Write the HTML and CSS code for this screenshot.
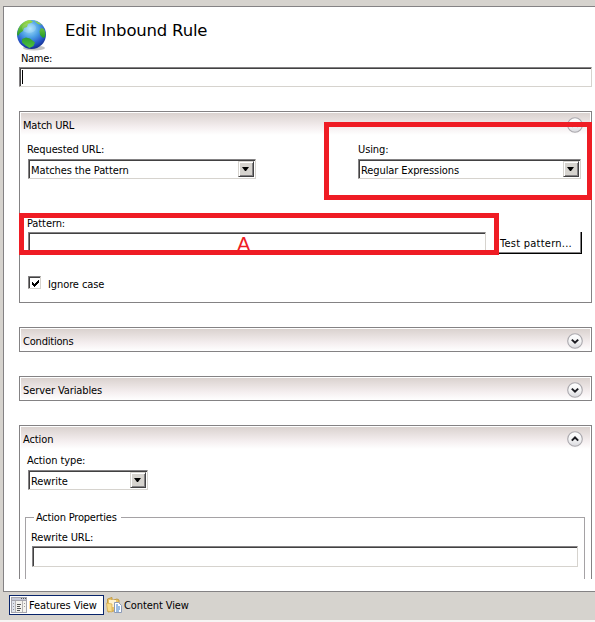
FILE: index.html
```html
<!DOCTYPE html>
<html lang="en">
<head>
<meta charset="utf-8">
<title>Edit Inbound Rule</title>
<link rel="stylesheet" href="styles.css">
</head>
<body>
<svg class="defs" width="0" height="0">
  <defs>
    <linearGradient id="disc" x1="0" y1="0" x2="0" y2="1"><stop offset="0" stop-color="#fff"/><stop offset=".55" stop-color="#f3f3f4"/><stop offset="1" stop-color="#d9d9de"/></linearGradient>
    <radialGradient id="sea" cx=".45" cy=".3" r=".7"><stop offset="0" stop-color="#a8e4fb"/><stop offset=".45" stop-color="#4a9de4"/><stop offset=".8" stop-color="#2452c4"/><stop offset="1" stop-color="#16308f"/></radialGradient>
    <linearGradient id="land" x1="0" y1="0" x2="0" y2="1"><stop offset="0" stop-color="#a4dc48"/><stop offset="1" stop-color="#1f9a28"/></linearGradient>
    <linearGradient id="land-low" x1="0" y1="0" x2="0" y2="1"><stop offset="0" stop-color="#2f9c35"/><stop offset="1" stop-color="#4fc43a"/></linearGradient>
    <symbol id="down" viewBox="0 0 16 16"><circle cx="8" cy="8" r="7.3" fill="url(#disc)" stroke="#aaa8ad" stroke-width="1.1"/><path d="M4.8 6.6 8 9.7l3.2-3.1" fill="none" stroke="#1c1c22" stroke-width="2"/></symbol>
    <symbol id="up" viewBox="0 0 16 16"><circle cx="8" cy="8" r="7.3" fill="url(#disc)" stroke="#aaa8ad" stroke-width="1.1"/><path d="M4.8 9.6 8 6.5l3.2 3.1" fill="none" stroke="#1c1c22" stroke-width="2"/></symbol>
  </defs>
</svg>
<main class="pane">
  <header class="title-row">
    <svg class="globe" width="32" height="33" viewBox="0 0 32 33">
      <ellipse cx="18" cy="29" rx="11" ry="2.600" fill="#c4c4c4"/>
      <circle cx="15.500" cy="15.500" r="14.500" fill="url(#sea)"/>
      <path d="M2 11C4 5 9 1.500 14 1l3 1.500-2 1.500-3 1-1 3-3 1-1 3-3 2-2 3-1-2z" fill="url(#land)"/>
      <path d="M18 1.500 23 3.500 26 6l-4-1zM25 9l3 1 1.500 4-.5 4-2 1-3-3-.5-4z" fill="url(#land)"/>
      <path d="M6 20l4-1.500 4 1 5 4-1.500 3.500-4 2-4-2.500-3.500-3z" fill="url(#land-low)"/>
      <ellipse cx="13" cy="9" rx="7" ry="5" fill="#fff" opacity=".16"/>
    </svg>
    <h1>Edit Inbound Rule</h1>
  </header>
  <label class="text name-label">Name:</label>
  <div class="field name-field"><i class="caret"></i></div>

  <section class="group match">
    <div class="group-head"><span class="text t-match">Match URL</span><svg class="toggle" width="16" height="16"><use href="#up"/></svg></div>
    <div class="match-row">
      <div class="requested"><label class="text t-req">Requested URL:</label>
        <div class="field select"><span class="text t-matches">Matches the Pattern</span><b class="drop"></b></div></div>
      <div class="using"><label class="text t-using">Using:</label>
        <div class="field select"><span class="text t-regex">Regular Expressions</span><b class="drop"></b></div></div>
    </div>
    <label class="text t-pattern">Pattern:</label>
    <div class="pattern-row"><div class="field pattern"></div><div class="button"><span class="text t-test">Test pattern...</span></div></div>
    <div class="check-row"><span class="checkbox"><svg width="9" height="9" viewBox="0 0 9 9" shape-rendering="crispEdges"><path d="M1 3h1v1h1v1h1V4h1V3h1V2h1V1h1v3H7v1H6v1H5v1H4v1H3V7H2V6H1z" fill="#000"/></svg></span><span class="text t-ignore">Ignore case</span></div>
    <span class="mark-letter">A</span>
    <div class="mark mark-using"></div>
    <div class="mark mark-pattern"></div>
  </section>

  <section class="group"><div class="group-head"><span class="text t-cond">Conditions</span><svg class="toggle" width="16" height="16"><use href="#down"/></svg></div></section>
  <section class="group"><div class="group-head"><span class="text t-server">Server Variables</span><svg class="toggle" width="16" height="16"><use href="#down"/></svg></div></section>

  <section class="group action">
    <div class="group-head"><span class="text t-action">Action</span><svg class="toggle" width="16" height="16"><use href="#up"/></svg></div>
    <label class="text t-type">Action type:</label>
    <div class="field select type"><span class="text t-rewrite">Rewrite</span><b class="drop"></b></div>
    <div class="properties">
      <div class="legend"><i class="rule short"></i><span class="text t-props">Action Properties</span><i class="rule"></i></div>
      <div class="properties-body"><label class="text t-url">Rewrite URL:</label><div class="field url"></div></div>
    </div>
  </section>
</main>
<footer class="tabs">
  <div class="tab active">
    <svg width="16" height="16" viewBox="0 0 16 16" shape-rendering="crispEdges"><path d="M0 0h16v16H0z" fill="#a5a5ad"/><path d="M1 4h14v11H1z" fill="#f4f3ee"/><path d="M1 1h14v2H1z" fill="#c5c8d8"/><path d="M10 1h1v1h-1zM12 1h1v1h-1zM14 1h1v1h-1z" fill="#555"/><path d="M1 4h3v11H1z" fill="#dfe3ec"/><path d="M4 4h1v11H4zM11 4h1v11h-1z" fill="#b7b5b5"/><path d="M6 7h4v1H6zM6 9h3v1H6zM6 11h4v1H6zM6 13h3v1H6z" fill="#555"/><path d="M2 6h1v1H2zM2 9h1v1H2zM2 12h1v1H2zM13 6h1v1h-1zM13 9h1v1h-1z" fill="#999"/></svg>
    <span class="text t-features">Features View</span>
  </div>
  <div class="tab">
    <svg width="16" height="16" viewBox="0 0 16 16"><path d="M1.500 2 6 .5v3L11 2l2 1v10L2 15z" fill="#edc568" stroke="#c19a42"/><path d="M3 3h7v7H3z" fill="#fff3cf"/><path d="M.5 6 6 7v8l-4.500-1z" fill="#f8dc8c" stroke="#d3a94d" stroke-width=".7"/><path d="M8.500 5.500h4l3 3v7h-7z" fill="#fff" stroke="#8c9bb8"/><path d="M10 8h2M10 10h4M10 12h4M10 14h3" stroke="#387bc5"/></svg>
    <span class="text t-content">Content View</span>
  </div>
</footer>
</body>
</html>
```
FILE: styles.css
```css
* { box-sizing: border-box; }
body {
  margin: 0;
  width: 595px;
  height: 622px;
  padding-top: 6px;
  overflow: hidden;
  background: #d6d3ce;
  color: #000;
  font: 11px/14px "DejaVu Sans Condensed", "DejaVu Sans", sans-serif;
  font-stretch: condensed;
  letter-spacing: -0.1px;
}
.defs { position: absolute; }
.text { display: block; height: 14px; white-space: nowrap; }
.pane {
  height: 586px;
  margin-left: 3px;
  padding: 0 3px 0 15px;
  border: 1px solid #848284;
  border-right: 0;
  background: #fff;
}
.title-row { display: flex; height: 45px; padding-top: 12px; margin-left: -3px; }
.globe { flex: none; }
h1 { margin: 0 0 0 17px; font: 400 16.5px/24px "DejaVu Sans", sans-serif; font-stretch: normal; letter-spacing: -0.2px; white-space: nowrap; }
.name-label { margin-left: 2px; letter-spacing: -0.3px; }
.field {
  height: 20px;
  border: 1px solid #848284;
  border-right-color: #d6d3ce;
  border-bottom-color: #d6d3ce;
  box-shadow: inset 1px 1px #424142;
  background: #fff;
}
.name-field { margin: 1px 0 24px; padding: 2px; }
.caret { display: block; width: 1px; height: 14px; background: #000; }
.group {
  position: relative;
  height: 25px;
  margin-bottom: 24px;
  border: 1px solid #848284;
  padding: 1px;
}
.group-head {
  display: flex;
  justify-content: space-between;
  height: 22px;
  padding: 5px 7px 0 2px;
  background: linear-gradient(#dad2cf, #f5eff0 65%, #fff);
}
.group-head .text { padding-top: 1px; height: 15px; }
.toggle { margin-top: -1px; }
.t-match { letter-spacing: -0.2px; }
.t-server { letter-spacing: -0.1px; }
.t-cond { letter-spacing: -0.2px; }
.match { height: 192px; }
.match-row { display: flex; gap: 103px; padding: 8px 9px 0 7px; }
.requested { width: 227px; flex: none; }
.using { width: 222px; flex: none; }
.requested .select { width: 228px; }
.using .select { width: 223px; }
.t-req, .t-using { margin-left: -1px; }
.t-using { margin-left: 0; }
.select { display: flex; justify-content: space-between; margin-top: 2px; padding: 1px 1px 0 2px; }
.select .text { padding-top: 3px; height: 17px; }
.drop {
  display: flex;
  width: 16px;
  height: 16px;
  border: 1px solid #d6d3ce;
  border-right-color: #424142;
  border-bottom-color: #424142;
  box-shadow: inset 1px 1px #fff, inset -1px -1px #848284;
  background: #d6d3ce;
}
.drop::after { content: ""; width: 7px; height: 4px; margin: 5px 0 0 3px; background: #000; clip-path: polygon(0 0, 100% 0, 57% 100%, 43% 100%); }
.t-pattern { margin: 38px 0 0 6px; }
.pattern-row { display: flex; margin: 1px 0 0 7px; }
.pattern { width: 458px; }
.button { width: 96px; height: 22px; padding: 5px 0 0 14px; border: solid #000; border-width: 0 1px 1px 0; box-shadow: inset -1px -1px #848284; }
.t-test { letter-spacing: 0.25px; }
.check-row { display: flex; gap: 7px; margin: 22px 0 0 7px; }
.checkbox { width: 13px; height: 13px; padding: 1px; border: 1px solid #848284; border-right-color: #d6d3ce; border-bottom-color: #d6d3ce; box-shadow: inset 1px 1px #424142; }
.checkbox svg { display: block; margin: 1px; }
.t-ignore { margin-top: 2px; letter-spacing: -0.1px; }
.mark { position: absolute; border: 5px solid #ef1c24; }
.mark-using { left: 304px; top: 10px; width: 268px; height: 78px; }
.mark-pattern { left: -1px; top: 101px; width: 480px; height: 42px; }
.mark-letter { position: absolute; left: 217px; top: 120px; font: 20px/24px "Liberation Sans", sans-serif; color: #ef1c24; }
.action { height: 154px; border-bottom: 0; overflow: hidden; margin: 0; }
.t-type { margin: 5px 0 0 6px; }
.type { width: 120px; margin: 2px 0 0 7px; }
.properties { margin: 20px 5px 0 4px; }
.legend { display: flex; align-items: center; height: 14px; }
.rule { height: 1px; flex: 1; background: #a5a2a5; }
.short { flex: none; width: 9px; margin-right: 2px; }
.t-props { height: 16px; padding-top: 2px; margin-right: 4px; letter-spacing: -0.2px; }
.properties-body { height: 63px; margin-top: -7px; padding: 14px 6px 0; border: 1px solid #a5a2a5; border-width: 0 1px; }
.t-url { margin-left: -1px; }
.url { height: 21px; margin-top: 1px; }
.tabs { display: flex; height: 30px; padding: 3px 0 0 9px; border-bottom: 2px solid #f7f5f4; }
.tab { display: flex; width: 95px; height: 20px; padding: 1px; border: 1px solid transparent; }
.tab svg { flex: none; margin-right: 2px; }
.tab .text { margin-top: 2px; }
.t-content { letter-spacing: -0.1px; }
.active { background: #fff; border-color: #08246b; }
```
